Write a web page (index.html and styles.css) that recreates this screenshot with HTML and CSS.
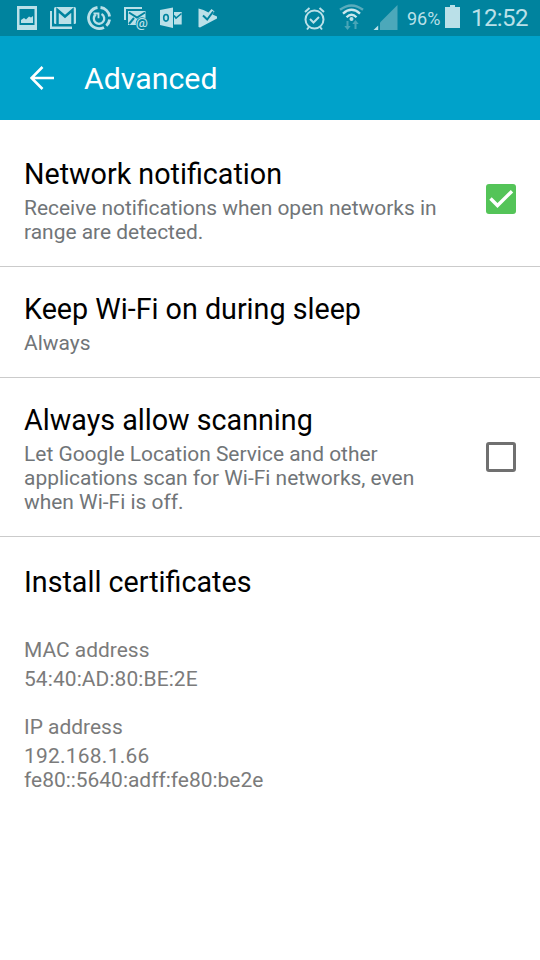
FILE: index.html
```html
<!DOCTYPE html>
<html lang="en">
<head>
<meta charset="utf-8">
<title>Advanced</title>
<link rel="stylesheet" href="styles.css">
</head>
<body>
<div class="status">
  <svg class="status-icons" width="300" height="36" viewBox="0 0 300 36">
    <path fill-rule="evenodd" d="M17 6h20v24H17zM19.500 9v16h15V9z"/>
    <path d="M21 23v-3l3-2 2 1.500 3-3 2 1 2-1.500v7z"/>
    <path d="M50 11h2v15.500h20V29H50z"/>
    <rect x="54" y="7" width="22" height="17" rx="1.500"/>
    <path class="cut" d="M57.500 24V10l7.500 6.500L72.500 10v14"/>
    <g class="line">
      <path stroke-width="2.800" d="M97.500 7.500A10.600 10.600 0 1 0 104 27.400M106.300 25.700A10.600 10.600 0 0 0 109.600 19.500M109.600 16.500A10.600 10.600 0 0 0 100.500 7.500"/>
      <path stroke-width="2.300" d="M101.500 14A5.200 5.200 0 1 1 95.800 14.500"/>
      <path stroke-width="1.800" d="M93.500 13.500h5v4.800"/>
    </g>
    <path d="M124 7h18v2h-16v11h-2z"/>
    <path d="M128 11h17.500v8.500h-4L137 25h-9z"/>
    <path class="cut thick" d="M129 12.500l8 5 8-5M129 24l5-6"/>
    <circle class="badge" cx="142" cy="23.500" r="6.300"/>
    <text class="at" x="135.800" y="27.300">@</text>
    <path d="M160 10l13-2.500v20.500L160 25z"/>
    <path d="M174 12h7.700v12.500H174z"/>
    <ellipse class="cut thin" cx="166" cy="17.800" rx="2.300" ry="3.300"/>
    <path class="cut thin" d="M174 15.500l2 2.500 5.500-4.500"/>
    <path d="M198.500 8.500l5 1.500 5 2.500 3-3.500 3 2.500-2 3 4.500 2v2L200 27.500l-1.500-.5z"/>
    <path class="cut thick" d="M203 15.500l4.200 4 6-8"/>
  </svg>
  <svg class="signal-icons" width="104" height="36" viewBox="300 0 104 36">
    <g class="line" stroke-width="2">
      <circle cx="314.500" cy="19.500" r="9"/>
      <path d="M310 19l3.500 3.500 5.500-5.500M305 12l4.500-4M324 12l-4.500-4M309 27l-2 2.500M320 27l2 2.500"/>
    </g>
    <path fill="none" stroke="#5aacbc" stroke-width="2.400" d="M340 9.800Q351.500 1 363 9.800"/>
    <path fill="none" stroke="#cce8ed" stroke-width="2.300" d="M343 13.600Q351.500 6 360 13.600M346.500 17.300Q351.500 12.300 356.500 17.300"/>
    <circle cx="351.500" cy="19" r="2"/>
    <path fill="#48a5b7" d="M346.500 21h2v5h2.200l-3.200 4-3.200-4h2.200zM354.500 29h2v-5h2.200l-3.200-4-3.200 4h2.200z"/>
    <path fill="#4ca8ba" d="M380 30V22.500L397.500 5v25z"/>
    <path d="M373.500 30l4.700-4.500V30z"/>
  </svg>
  <span class="percent">96%</span>
  <svg class="battery" width="15" height="24" viewBox="0 0 15 24"><path d="M5 0h5v2h5v21H0V2h5z"/></svg>
  <span class="clock">12:52</span>
</div>
<header class="bar">
  <svg width="24" height="24" viewBox="0 0 24 24"><path d="M24 12H2M12.500 1L1.500 12l11 11"/></svg>
  <h1>Advanced</h1>
</header>
<main>
  <section class="row first">
    <div>
      <h2>Network notification</h2>
      <p>Receive notifications when open networks in<br>range are detected.</p>
    </div>
    <span class="box checked"><svg width="30" height="30" viewBox="0 0 30 30"><path d="M4.500 14.500l7 7L26 7.200"/></svg></span>
  </section>
  <section class="row">
    <div>
      <h2>Keep Wi-Fi on during sleep</h2>
      <p>Always</p>
    </div>
  </section>
  <section class="row">
    <div>
      <h2>Always allow scanning</h2>
      <p>Let Google Location Service and other<br>applications scan for Wi-Fi networks, even<br>when Wi-Fi is off.</p>
    </div>
    <span class="box"></span>
  </section>
  <section class="row last">
    <h2>Install certificates</h2>
  </section>
  <dl>
    <dt>MAC address</dt>
    <dd class="mac">54:40:AD:80:BE:2E</dd>
    <dt>IP address</dt>
    <dd><span class="ipv4">192.168.1.66</span><br>fe80::5640:adff:fe80:be2e</dd>
  </dl>
</main>
</body>
</html>
```
FILE: styles.css
```css
* { box-sizing: border-box; }
body { margin: 0; width: 540px; height: 960px; background: #fff; font-family: Roboto, sans-serif; overflow: hidden; }
h1, h2, p, dl, dd { margin: 0; font-weight: 400; }
svg { display: block; flex: none; }

.status { display: flex; height: 36px; background: #00839e; color: #bae0e8; }
.status svg { fill: #bae0e8; }
.line { fill: none; stroke: #bae0e8; }
.status .cut { fill: none; stroke: #00839e; stroke-width: 2.5; }
.status .thin { stroke-width: 1.6; }
.status .thick { stroke-width: 2; }
.status .badge { fill: #00839e; }
.at { font-size: 13.5px; font-weight: 500; }
.percent { width: 41px; padding-left: 3px; font-size: 18px; line-height: 38px; }
.battery { margin-top: 5px; }
.clock { margin-left: 11px; font-size: 24px; line-height: 37px; white-space: nowrap; letter-spacing: -0.6px; }

.bar { display: flex; align-items: center; height: 84px; padding-left: 30px; background: #00a2ca; color: #fff; }
.bar svg { fill: none; stroke: #fff; stroke-width: 2.6; }
.bar h1 { margin-left: 30px; font-size: 30.3px; line-height: 36px; padding-top: 2px; }

.row { display: flex; justify-content: space-between; align-items: center; padding: 24px 24px 22px; border-bottom: 1px solid #cbcbcb; }
.first { padding-top: 36px; }
.last { padding: 27px 24px 0; border: 0; }
h2 { font-size: 28.7px; line-height: 36px; color: #000; white-space: nowrap; }
p { margin-top: 4px; }
p, dl { font-size: 20.95px; line-height: 24px; color: #717578; white-space: nowrap; }
.box { flex: none; width: 30px; height: 30px; margin-top: -2px; border: 3px solid #707070; border-radius: 3px; }
.checked { border: 0; background: #54c458; }
.box svg { fill: none; stroke: #fff; stroke-width: 3.4; }

dl { padding: 38px 24px 0; color: #7b7b7b; }
dd { margin: 5px 0 24px; }
.mac { letter-spacing: 0.1px; }
.ipv4 { letter-spacing: 0.25px; }
```
